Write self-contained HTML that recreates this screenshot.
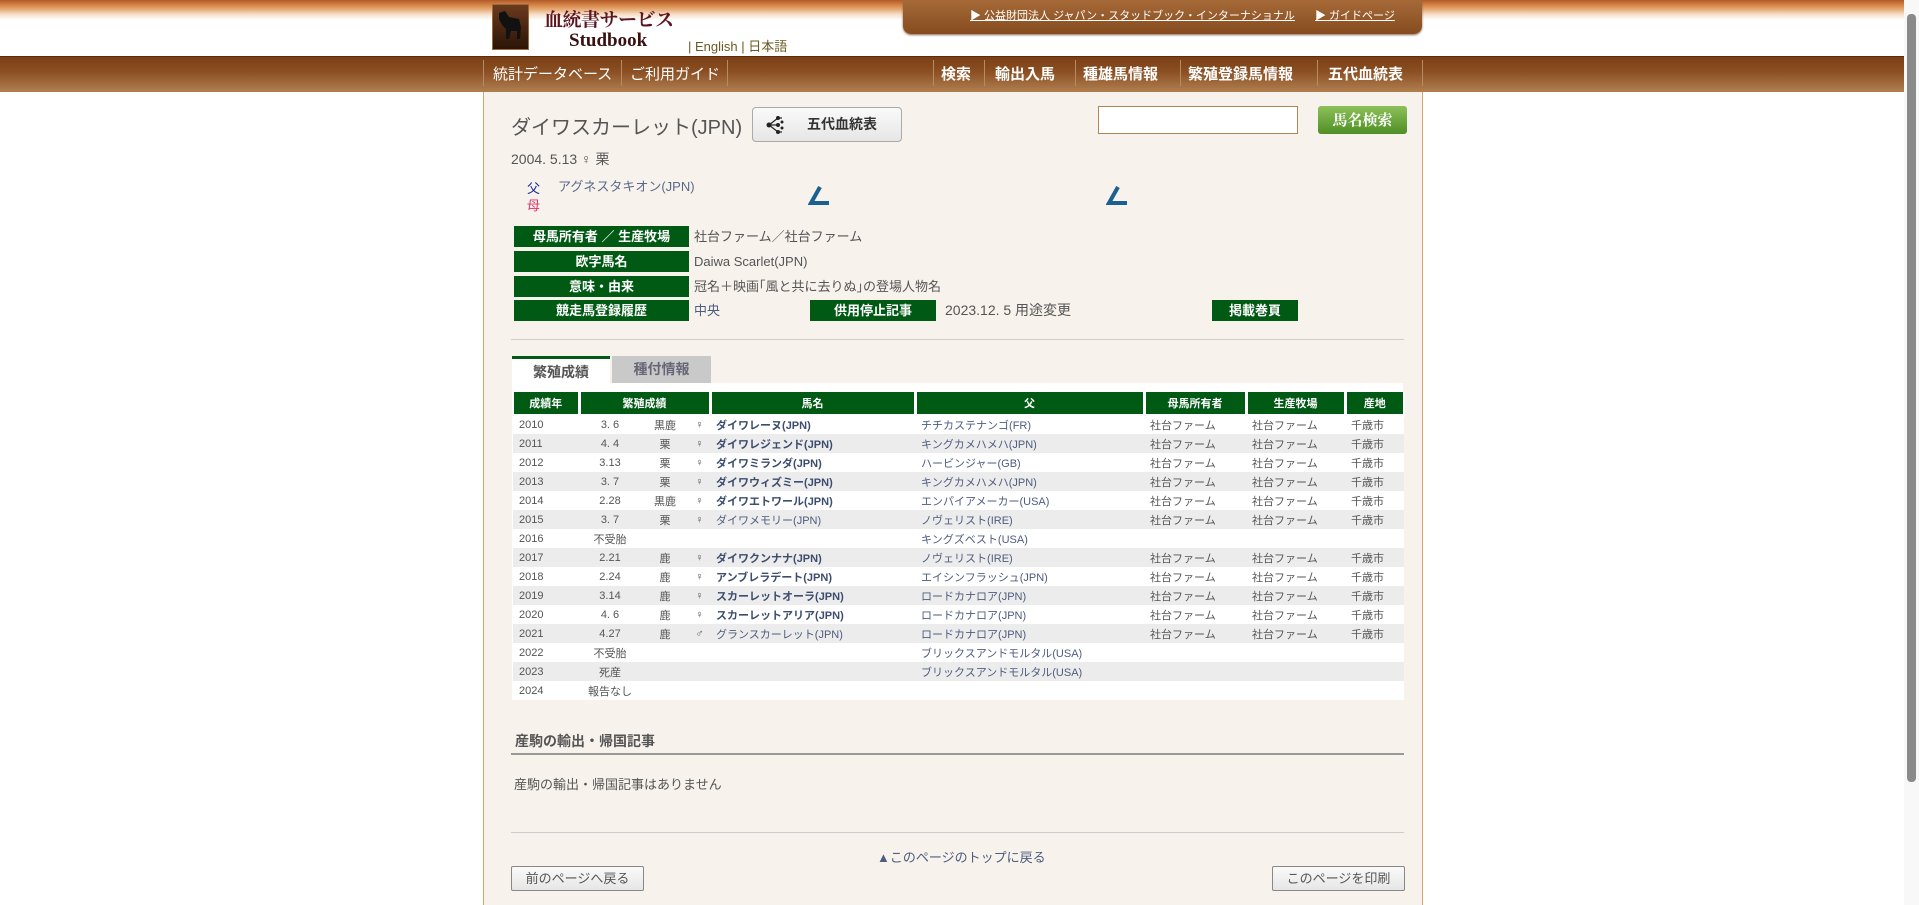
<!DOCTYPE html>
<html><head><meta charset="utf-8"><style>
*{box-sizing:border-box;margin:0;padding:0}
body{width:1919px;height:905px;overflow:hidden;background:#fff;font-family:"Liberation Sans","Noto Sans CJK JP",sans-serif;color:#555;position:relative}
.abs{position:absolute}
#topgrad{left:0;top:0;width:1904px;height:20px;background:linear-gradient(#b05a2a 0,#c8733a 3px,#d98c4e 6px,#e8b07e 10px,#f5dcc4 14px,#fff 20px)}
#nav{left:0;top:56px;width:1904px;height:36px;background:linear-gradient(#7a3f16,#8a4e22 40%,#b07f50);border-top:1px solid #5b2c0c}
#tab{left:903px;top:0;width:519px;height:34px;background:linear-gradient(#a66a38,#864c1f);border-radius:0 0 8px 8px;box-shadow:0 1px 2px #8a6a50}
#tab a{position:absolute;top:7px;color:#fff;font-size:11px;text-decoration:underline;white-space:nowrap}
#cont{left:483px;top:92px;width:940px;height:813px;background:#f7f2ec;border-left:1px solid #d9a46a;border-right:1px solid #d9a46a}
.navl{position:absolute;top:63px;color:#fff;font-size:15px}
.navr{position:absolute;top:63px;color:#fff;font-size:15px;font-weight:bold}
.sep{position:absolute;top:60px;width:1px;height:26px;background:#b88a60}
.lbl{position:absolute;background:#005a14;color:#fff;font-weight:bold;font-size:13px;text-align:center;height:21px;line-height:21px}
.val{position:absolute;font-size:13px;color:#555;line-height:21px}
table{position:absolute;left:512px;top:392px;width:891px;border-collapse:collapse;table-layout:fixed;font-size:11px}
th{background:#005a14;color:#fff;font-size:11px;height:23px;font-weight:bold;border-left:3px solid #fff;border-bottom:3px solid #fff}
th:first-child{border-left:2px solid #fff}
td{height:19px;white-space:nowrap;color:#555;padding-left:6px}
tr.g td{background:#ececec}
tr.w td{background:#fff}
td.n{color:#3d4d6e;font-weight:bold}
td.m{color:#4d5d7e}
td.c{text-align:center;padding:0}
.btn{position:absolute;border:1px solid #888;background:linear-gradient(#fafafa,#e6e6e6);font-size:13px;color:#555;text-align:center;border-radius:2px}
</style></head><body>
<div class="abs" id="topgrad"></div>
<div class="abs" style="left:492px;top:4px;width:37px;height:46px;background:linear-gradient(#6b3a1c,#2a1408);border:1px solid #9b6a3a">
<svg width="35" height="44" viewBox="0 0 35 44"><path d="M6 8 L12 6 L16 12 L26 14 L28 22 L27 34 L24 34 L24 26 L18 26 L16 34 L13 34 L13 24 L9 20 L6 14Z" fill="#111"/></svg></div>
<div class="abs" style="left:544px;top:5px;font-family:'Noto Serif CJK SC',serif;font-weight:bold;font-size:19px;color:#5a1420;letter-spacing:-0.5px">血統書サービス</div>
<div class="abs" style="left:569px;top:30px;font-family:'Liberation Serif',serif;font-weight:bold;font-size:19px;color:#3a1010">Studbook</div>
<div class="abs" style="left:688px;top:36px;font-size:13px;color:#6b5a20">| English | 日本語</div>
<div class="abs" id="tab"><a style="left:67px">▶ 公益財団法人 ジャパン・スタッドブック・インターナショナル</a><a style="left:412px">▶ ガイドページ</a></div>
<div class="abs" id="nav"></div>
<div class="sep" style="left:483px"></div>
<div class="navl" style="left:493px">統計データベース</div><div class="sep" style="left:621px"></div>
<div class="navl" style="left:630px">ご利用ガイド</div><div class="sep" style="left:727px"></div>
<div class="sep" style="left:933px"></div><div class="navr" style="left:941px">検索</div>
<div class="sep" style="left:984px"></div><div class="navr" style="left:995px">輸出入馬</div>
<div class="sep" style="left:1075px"></div><div class="navr" style="left:1083px">種雄馬情報</div>
<div class="sep" style="left:1180px"></div><div class="navr" style="left:1188px">繁殖登録馬情報</div>
<div class="sep" style="left:1317px"></div><div class="navr" style="left:1328px">五代血統表</div>
<div class="sep" style="left:1422px"></div>
<div class="abs" id="cont"></div>
<div class="abs" style="left:511px;top:111px;font-size:20px;color:#555">ダイワスカーレット(JPN)</div>
<div class="btn" style="left:752px;top:107px;width:150px;height:35px;line-height:33px;font-weight:bold;font-size:14px;color:#333;padding-left:30px;border-radius:4px;border-color:#aaa">
<svg style="position:absolute;left:12px;top:8px" width="20" height="18" viewBox="0 0 20 18"><g stroke="#222" stroke-width="1.2"><line x1="4" y1="9" x2="13" y2="2"/><line x1="4" y1="9" x2="13" y2="16"/><line x1="4" y1="9" x2="12" y2="9"/><line x1="13" y1="2" x2="17" y2="2"/><line x1="13" y1="16" x2="17" y2="16"/></g><circle cx="4" cy="9" r="2.5" fill="#222"/><circle cx="13" cy="2" r="2" fill="#222"/><circle cx="13" cy="9" r="2" fill="#222"/><circle cx="13" cy="16" r="2" fill="#222"/><circle cx="17" cy="6" r="1.5" fill="#222"/><circle cx="17" cy="12" r="1.5" fill="#222"/></svg>五代血統表</div>
<div class="abs" style="left:1098px;top:106px;width:200px;height:28px;background:#fff;border:1px solid #b58450"></div>
<div class="abs" style="left:1318px;top:106px;width:89px;height:28px;background:linear-gradient(#8ec05a,#4f8f25);border-radius:3px;color:#fff;font-family:'Noto Serif CJK SC',serif;font-weight:bold;font-size:15px;text-align:center;line-height:27px">馬名検索</div>
<div class="val" style="left:511px;top:149px;font-size:14px">2004. 5.13 ♀ 栗</div>
<div class="abs" style="left:527px;top:178px;font-size:13px;color:#1a2a9a">父</div>
<div class="abs" style="left:527px;top:195px;font-size:13px;color:#e0306a">母</div>
<div class="val" style="left:558px;top:176px;color:#5a6a8a">アグネスタキオン(JPN)</div>
<svg class="abs" style="left:808px;top:184px" width="24" height="24"><path d="M12 3 L3 19 L21 19" stroke="#1a6090" stroke-width="4" fill="none"/></svg>
<svg class="abs" style="left:1106px;top:184px" width="24" height="24"><path d="M12 3 L3 19 L21 19" stroke="#1a6090" stroke-width="4" fill="none"/></svg>
<div class="lbl" style="left:514px;top:226px;width:175px">母馬所有者 ／ 生産牧場</div><div class="val" style="left:694px;top:226px">社台ファーム／社台ファーム</div>
<div class="lbl" style="left:514px;top:251px;width:175px">欧字馬名</div><div class="val" style="left:694px;top:251px">Daiwa  Scarlet(JPN)</div>
<div class="lbl" style="left:514px;top:276px;width:175px">意味・由来</div><div class="val" style="left:694px;top:276px">冠名＋映画｢風と共に去りぬ｣の登場人物名</div>
<div class="lbl" style="left:514px;top:300px;width:175px">競走馬登録履歴</div><div class="val" style="left:694px;top:300px;color:#4d5d7e">中央</div>
<div class="lbl" style="left:810px;top:300px;width:126px">供用停止記事</div><div class="val" style="left:945px;top:300px;font-size:14px">2023.12. 5 用途変更</div>
<div class="lbl" style="left:1212px;top:300px;width:86px">掲載巻頁</div>
<div class="abs" style="left:511px;top:339px;width:893px;height:1px;background:#d5ccc2"></div>
<div class="abs" style="left:512px;top:356px;width:98px;height:30px;background:#fff;border-top:3px solid #005a14;font-size:14px;font-weight:bold;color:#555;text-align:center;line-height:26px">繁殖成績</div>
<div class="abs" style="left:612px;top:356px;width:99px;height:27px;background:#c9c9c9;font-size:14px;font-weight:bold;color:#667;text-align:center;line-height:27px">種付情報</div>
<div class="abs" style="left:512px;top:383px;width:891px;height:317px;background:#fff"></div>
<table>
<colgroup><col style="width:66px"><col style="width:62px"><col style="width:48px"><col style="width:21px"><col style="width:205px"><col style="width:229px"><col style="width:102px"><col style="width:99px"><col style="width:59px"></colgroup>
<tr><th>成績年</th><th colspan="3">繁殖成績</th><th>馬名</th><th>父</th><th>母馬所有者</th><th>生産牧場</th><th style="border-right:2px solid #fff">産地</th></tr>
<tr class="w"><td>2010</td><td class="c">3. 6</td><td class="c">黒鹿</td><td class="c">♀</td><td class="n">ダイワレーヌ(JPN)</td><td class="m">チチカステナンゴ(FR)</td><td>社台ファーム</td><td>社台ファーム</td><td>千歳市</td></tr>
<tr class="g"><td>2011</td><td class="c">4. 4</td><td class="c">栗</td><td class="c">♀</td><td class="n">ダイワレジェンド(JPN)</td><td class="m">キングカメハメハ(JPN)</td><td>社台ファーム</td><td>社台ファーム</td><td>千歳市</td></tr>
<tr class="w"><td>2012</td><td class="c">3.13</td><td class="c">栗</td><td class="c">♀</td><td class="n">ダイワミランダ(JPN)</td><td class="m">ハービンジャー(GB)</td><td>社台ファーム</td><td>社台ファーム</td><td>千歳市</td></tr>
<tr class="g"><td>2013</td><td class="c">3. 7</td><td class="c">栗</td><td class="c">♀</td><td class="n">ダイワウィズミー(JPN)</td><td class="m">キングカメハメハ(JPN)</td><td>社台ファーム</td><td>社台ファーム</td><td>千歳市</td></tr>
<tr class="w"><td>2014</td><td class="c">2.28</td><td class="c">黒鹿</td><td class="c">♀</td><td class="n">ダイワエトワール(JPN)</td><td class="m">エンパイアメーカー(USA)</td><td>社台ファーム</td><td>社台ファーム</td><td>千歳市</td></tr>
<tr class="g"><td>2015</td><td class="c">3. 7</td><td class="c">栗</td><td class="c">♀</td><td class="m">ダイワメモリー(JPN)</td><td class="m">ノヴェリスト(IRE)</td><td>社台ファーム</td><td>社台ファーム</td><td>千歳市</td></tr>
<tr class="w"><td>2016</td><td class="c">不受胎</td><td></td><td></td><td></td><td class="m">キングズベスト(USA)</td><td></td><td></td><td></td></tr>
<tr class="g"><td>2017</td><td class="c">2.21</td><td class="c">鹿</td><td class="c">♀</td><td class="n">ダイワクンナナ(JPN)</td><td class="m">ノヴェリスト(IRE)</td><td>社台ファーム</td><td>社台ファーム</td><td>千歳市</td></tr>
<tr class="w"><td>2018</td><td class="c">2.24</td><td class="c">鹿</td><td class="c">♀</td><td class="n">アンブレラデート(JPN)</td><td class="m">エイシンフラッシュ(JPN)</td><td>社台ファーム</td><td>社台ファーム</td><td>千歳市</td></tr>
<tr class="g"><td>2019</td><td class="c">3.14</td><td class="c">鹿</td><td class="c">♀</td><td class="n">スカーレットオーラ(JPN)</td><td class="m">ロードカナロア(JPN)</td><td>社台ファーム</td><td>社台ファーム</td><td>千歳市</td></tr>
<tr class="w"><td>2020</td><td class="c">4. 6</td><td class="c">鹿</td><td class="c">♀</td><td class="n">スカーレットアリア(JPN)</td><td class="m">ロードカナロア(JPN)</td><td>社台ファーム</td><td>社台ファーム</td><td>千歳市</td></tr>
<tr class="g"><td>2021</td><td class="c">4.27</td><td class="c">鹿</td><td class="c">♂</td><td class="m">グランスカーレット(JPN)</td><td class="m">ロードカナロア(JPN)</td><td>社台ファーム</td><td>社台ファーム</td><td>千歳市</td></tr>
<tr class="w"><td>2022</td><td class="c">不受胎</td><td></td><td></td><td></td><td class="m">ブリックスアンドモルタル(USA)</td><td></td><td></td><td></td></tr>
<tr class="g"><td>2023</td><td class="c">死産</td><td></td><td></td><td></td><td class="m">ブリックスアンドモルタル(USA)</td><td></td><td></td><td></td></tr>
<tr class="w"><td>2024</td><td class="c">報告なし</td><td></td><td></td><td></td><td></td><td></td><td></td><td></td></tr>
</table>
<div class="abs" style="left:515px;top:731px;font-size:14px;font-weight:bold;color:#555">産駒の輸出・帰国記事</div>
<div class="abs" style="left:511px;top:753px;width:893px;height:2px;background:#999"></div>
<div class="abs" style="left:514px;top:774px;font-size:13px;color:#555">産駒の輸出・帰国記事はありません</div>
<div class="abs" style="left:511px;top:832px;width:893px;height:1px;background:#ccc"></div>
<div class="abs" style="left:877px;top:847px;font-size:13px;color:#4d5d7e">▲このページのトップに戻る</div>
<div class="btn" style="left:511px;top:866px;width:133px;height:25px;line-height:23px">前のページへ戻る</div>
<div class="btn" style="left:1272px;top:866px;width:133px;height:25px;line-height:23px">このページを印刷</div>
<div class="abs" style="left:1904px;top:0;width:15px;height:905px;background:#f8f8f8"></div>
<div class="abs" style="left:1907px;top:14px;width:9px;height:768px;background:#8a8a8a;border-radius:4px"></div>
</body></html>
